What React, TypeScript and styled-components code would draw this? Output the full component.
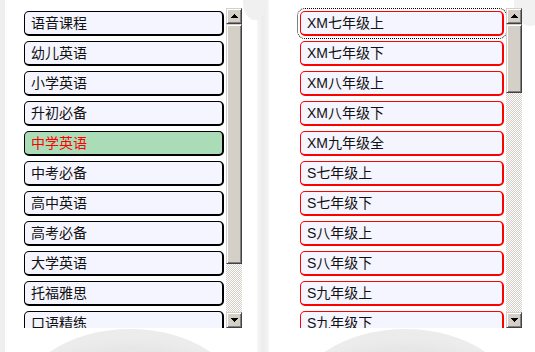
import React from "react";
import styled, { createGlobalStyle, css } from "styled-components";

const GlobalStyle = createGlobalStyle`
  html, body { margin: 0; padding: 0; background: #ffffff; }
  body { font-family: "Liberation Sans", "Noto Sans CJK SC", sans-serif; }
`;

const Page = styled.div`
  position: relative;
  width: 535px;
  height: 352px;
  overflow: hidden;
  box-sizing: border-box;
  padding: 8px 0 0 24px;
  display: flex;
  align-items: flex-start;
  gap: 55px;
`;

const Backdrop = styled.svg`
  position: absolute;
  left: 0;
  top: 0;
  z-index: 0;
`;

const ListBox = styled.div`
  position: relative;
  z-index: 1;
  display: flex;
  height: 320px;
`;

const ItemColumn = styled.div<{ $w: number; $pl: number }>`
  width: ${(p) => p.$w}px;
  height: 320px;
  box-sizing: border-box;
  padding: 3px 0 0 ${(p) => p.$pl}px;
  display: flex;
  flex-direction: column;
  gap: 5px;
  overflow: hidden;
`;

const Item = styled.div<{
  $w: number;
  $tone: "black" | "red";
  $selected?: boolean;
  $focused?: boolean;
}>`
  flex: none;
  width: ${(p) => p.$w}px;
  height: 25px;
  box-sizing: border-box;
  border-style: solid;
  border-width: 1px 2px 2px 1px;
  border-radius: 5px;
  border-color: ${(p) => (p.$tone === "red" ? "#ff0000" : "#000000")};
  background: ${(p) => (p.$selected ? "#a9dcb7" : "#f5f5ff")};
  color: ${(p) => (p.$selected ? "#ff0000" : "#111111")};
  font-size: 14px;
  line-height: 22px;
  padding-left: 6px;
  white-space: nowrap;
  ${(p) =>
    p.$focused &&
    css`
      outline: 1px dotted #000;
      outline-offset: 2px;
    `}
`;

const bevel = css`
  box-sizing: border-box;
  background: #d4d0c8;
  border: 1px solid;
  border-color: #d4d0c8 #404040 #404040 #d4d0c8;
  box-shadow: inset 1px 1px #ffffff, inset -1px -1px #808080;
`;

const ScrollBar = styled.div`
  width: 16px;
  height: 320px;
  display: flex;
  flex-direction: column;
`;

const ArrowButton = styled.div`
  ${bevel};
  flex: none;
  width: 16px;
  height: 16px;
  display: flex;
  align-items: center;
  justify-content: center;
`;

const Track = styled.div`
  flex: 1;
  background-color: #ffffff;
  background-image: conic-gradient(#d4d0c8 25%, #ffffff 0 50%, #d4d0c8 0 75%, #ffffff 0);
  background-size: 2px 2px;
  display: flex;
  flex-direction: column;
`;

const Thumb = styled.div<{ $h: number }>`
  ${bevel};
  flex: none;
  width: 16px;
  height: ${(p) => p.$h}px;
`;

const Arrow = ({ down }: { down?: boolean }) => (
  <svg
    width="7"
    height="4"
    viewBox="0 0 7 4"
    shapeRendering="crispEdges"
    style={{ transform: down ? "scaleY(-1)" : undefined }}
  >
    <path d="M3 0h1v1h1v1h1v1h1v1H0V3h1V2h1V1h1z" fill="#000" />
  </svg>
);

const Scroll = ({ thumb }: { thumb: number }) => (
  <ScrollBar>
    <ArrowButton>
      <Arrow />
    </ArrowButton>
    <Track>
      <Thumb $h={thumb} />
    </Track>
    <ArrowButton>
      <Arrow down />
    </ArrowButton>
  </ScrollBar>
);

const leftItems = [
  "语音课程",
  "幼儿英语",
  "小学英语",
  "升初必备",
  "中学英语",
  "中考必备",
  "高中英语",
  "高考必备",
  "大学英语",
  "托福雅思",
  "口语精练",
];

const rightItems = [
  "XM七年级上",
  "XM七年级下",
  "XM八年级上",
  "XM八年级下",
  "XM九年级全",
  "S七年级上",
  "S七年级下",
  "S八年级上",
  "S八年级下",
  "S九年级上",
  "S九年级下",
];

export default function App() {
  return (
    <>
      <GlobalStyle />
      <Page>
        <Backdrop width="535" height="352" viewBox="0 0 535 352">
          <defs>
            <linearGradient id="band" x1="0" x2="1" y1="0" y2="0">
              <stop offset="0" stopColor="#f6f6f6" />
              <stop offset="0.5" stopColor="#ececec" />
              <stop offset="1" stopColor="#f6f6f6" />
            </linearGradient>
            <radialGradient id="arc" cx="0.5" cy="0.65" r="0.6">
              <stop offset="0.6" stopColor="#f4f4f4" />
              <stop offset="0.85" stopColor="#e6e6e6" />
              <stop offset="1" stopColor="#ececec" />
            </radialGradient>
          </defs>
          <rect x="0" y="0" width="535" height="352" fill="#ffffff" />
          <rect x="0" y="0" width="5" height="352" fill="#efefef" />
          <rect x="257" y="0" width="12" height="352" fill="url(#band)" />
          <ellipse cx="255" cy="2" rx="12" ry="18" fill="#f0f0f0" />
          <ellipse cx="530" cy="4" rx="16" ry="22" fill="#f1f1f1" />
          <ellipse cx="130" cy="405" rx="112" ry="76" fill="url(#arc)" />
          <ellipse cx="405" cy="405" rx="112" ry="76" fill="url(#arc)" />
        </Backdrop>

        <ListBox>
          <ItemColumn $w={202} $pl={0}>
            {leftItems.map((t, i) => (
              <Item key={t} $w={200} $tone="black" $selected={i === 4}>
                {t}
              </Item>
            ))}
          </ItemColumn>
          <Scroll thumb={240} />
        </ListBox>

        <ListBox>
          <ItemColumn $w={209} $pl={3}>
            {rightItems.map((t, i) => (
              <Item key={t} $w={204} $tone="red" $focused={i === 0}>
                {t}
              </Item>
            ))}
          </ItemColumn>
          <Scroll thumb={69} />
        </ListBox>
      </Page>
    </>
  );
}
